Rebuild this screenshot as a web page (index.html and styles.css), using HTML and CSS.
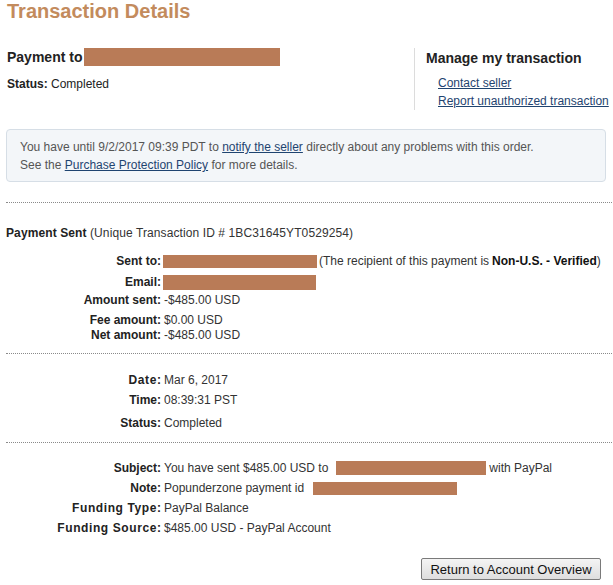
FILE: index.html
```html
<!DOCTYPE html>
<html>
<head>
<meta charset="utf-8">
<link rel="stylesheet" href="styles.css">
</head>
<body>
<div class="page">
  <h1 class="title">Transaction Details</h1>

  <div class="header">
    <div class="payee">
      <div class="payment-to">Payment to <span class="redact redact-head"></span></div>
      <div class="status"><b>Status:</b> Completed</div>
    </div>
    <div class="manage">
      <div class="manage-title">Manage my transaction</div>
      <div class="manage-links">
        <a href="#">Contact seller</a>
        <a href="#">Report unauthorized transaction</a>
      </div>
    </div>
  </div>

  <div class="notice">
    <p>You have until 9/2/2017 09:39 PDT to <a href="#">notify the seller</a> directly about any problems with this order.</p>
    <p>See the <a href="#">Purchase Protection Policy</a> for more details.</p>
  </div>

  <hr class="dots dots-first">

  <div class="sent-head"><b>Payment Sent</b> (Unique Transaction ID # 1BC31645YT0529254)</div>

  <div class="rows rows-a">
    <div class="row r-sent"><span class="lbl">Sent to:</span><span class="val"><span class="redact redact-sent"></span> (The recipient of this payment is <b>Non-U.S. - Verified</b>)</span></div>
    <div class="row r-email"><span class="lbl">Email:</span><span class="val"><span class="redact redact-email"></span></span></div>
    <div class="row r-amount"><span class="lbl">Amount sent:</span><span class="val">-$485.00 USD</span></div>
    <div class="row r-fee"><span class="lbl">Fee amount:</span><span class="val">$0.00 USD</span></div>
    <div class="row r-net"><span class="lbl">Net amount:</span><span class="val">-$485.00 USD</span></div>
  </div>

  <hr class="dots dots-second">

  <div class="rows rows-b">
    <div class="row r-date"><span class="lbl lbl-wide">Date:</span><span class="val">Mar 6, 2017</span></div>
    <div class="row r-time"><span class="lbl">Time:</span><span class="val">08:39:31 PST</span></div>
    <div class="row r-status"><span class="lbl">Status:</span><span class="val">Completed</span></div>
  </div>

  <hr class="dots dots-third">

  <div class="rows rows-c">
    <div class="row r-subject"><span class="lbl">Subject:</span><span class="val">You have sent $485.00 USD to <span class="redact redact-subject"></span> with PayPal</span></div>
    <div class="row r-note"><span class="lbl">Note:</span><span class="val">Popunderzone payment id <span class="redact redact-note"></span></span></div>
    <div class="row r-ftype"><span class="lbl lbl-wide">Funding Type:</span><span class="val">PayPal Balance</span></div>
    <div class="row r-fsource"><span class="lbl lbl-wide">Funding Source:</span><span class="val">$485.00 USD - PayPal Account</span></div>
  </div>

  <div class="actions">
    <button class="btn" type="button">Return to Account Overview</button>
  </div>
</div>
</body>
</html>
```

FILE: styles.css
```css
html, body {
  margin: 0;
  padding: 0;
  background: #fff;
}
body {
  font-family: "Liberation Sans", Arial, sans-serif;
  font-size: 12px;
  color: #333;
  overflow: hidden;
}
.page {
  padding-left: 6px;
  width: 607px;
}
.title {
  margin: 0;
  padding-left: 1px;
  font-size: 20px;
  line-height: 22px;
  font-weight: bold;
  color: #c38b5d;
}
.redact {
  display: inline-block;
  background: #b97b57;
  vertical-align: middle;
}
.header {
  display: flex;
  margin-top: 26px;
}
.payee {
  width: 407px;
  padding-left: 1px;
}
.payment-to {
  font-size: 14px;
  font-weight: bold;
  line-height: 18px;
  color: #222;
  display: flex;
  align-items: center;
}
.redact-head {
  width: 196px;
  height: 18px;
  margin-left: 2px;
}
.status {
  margin-top: 10px;
  line-height: 16px;
  color: #222;
}
.manage {
  border-left: 1px solid #dcdcdc;
  padding-left: 11px;
  height: 62px;
}
.manage-title {
  font-size: 14px;
  font-weight: bold;
  line-height: 18px;
  color: #222;
  margin-top: 1px;
}
.manage-links {
  display: flex;
  flex-direction: column;
  margin-top: 7px;
  padding-left: 12px;
}
.manage-links a {
  line-height: 18px;
  color: #1f4470;
  text-decoration: underline;
  white-space: nowrap;
}
.notice {
  margin-top: 19px;
  width: 572px;
  background: #f3f6f9;
  border: 1px solid #d6dee6;
  border-radius: 4px;
  padding: 8px 13px 7px;
  color: #555;
}
.notice p {
  margin: 0;
  line-height: 18px;
}
.notice a {
  color: #1f4470;
}
.dots {
  border: 0;
  border-top: 1px dotted #8a8a8a;
  margin: 0;
  width: 620px;
  height: 0;
}
.dots-first { margin-top: 20px; }
.dots-second { margin-top: 10px; }
.dots-third { margin-top: 11px; }

.sent-head {
  margin-top: 22px;
  line-height: 16px;
  color: #333;
  letter-spacing: 0.1px;
}
.sent-head b { color: #222; }

.row {
  display: grid;
  grid-template-columns: 155px 1fr;
  column-gap: 3px;
  line-height: 16px;
  align-items: center;
  white-space: nowrap;
}
.lbl {
  text-align: right;
  font-weight: bold;
  color: #222;
}
.lbl-wide {
  letter-spacing: 0.6px;
  margin-right: -0.6px;
}
.val {
  color: #333;
  display: flex;
  align-items: center;
}
.val b { color: #111; margin-left: 3px; }
.r-sent { margin-top: 12px; }
.r-email { margin-top: 5px; }
.r-amount { margin-top: 2px; }
.r-fee { margin-top: 5px; line-height: 15px; }
.r-net { line-height: 15px; }

.r-date { margin-top: 18px; }
.r-time { margin-top: 4px; }
.r-status { margin-top: 7px; }

.r-subject { margin-top: 17px; }
.r-note, .r-ftype, .r-fsource { margin-top: 4px; }

.redact-sent { width: 154px; height: 13px; margin-left: -1px; margin-right: 2px; }
.redact-email { width: 153px; height: 15px; margin-left: -1px; }
.redact-subject { width: 150px; height: 14px; margin-left: 8px; margin-right: 3px; }
.redact-note { width: 144px; height: 13px; margin-left: 9px; }

.actions {
  display: flex;
  justify-content: flex-end;
  margin-top: 22px;
  width: 595px;
}
.btn {
  font-family: "Liberation Sans", Arial, sans-serif;
  font-size: 13px;
  color: #111;
  width: 180px;
  height: 22px;
  padding: 0;
  border: 1px solid #7a7a7a;
  border-radius: 2px;
  background: linear-gradient(#f4f4f4, #dedede);
}
```
